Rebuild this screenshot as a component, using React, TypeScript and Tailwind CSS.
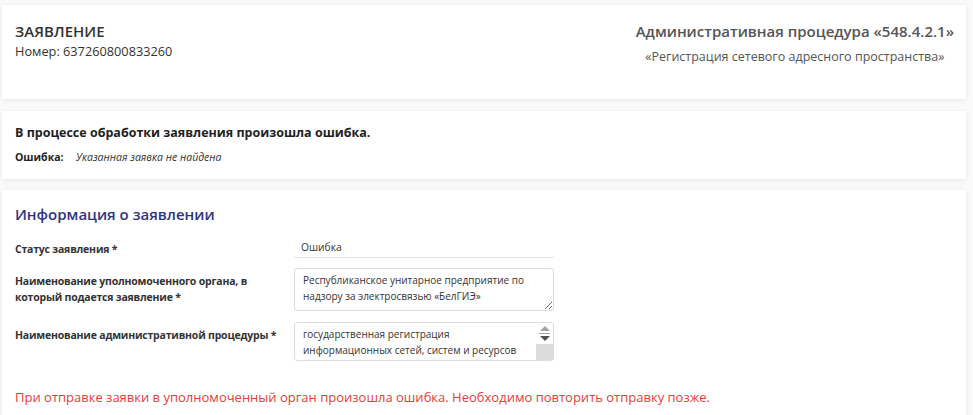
const font = { fontFamily: '"Open Sans", "Noto Sans", sans-serif' };

function Field({ label, children }: { label: string; children: React.ReactNode }) {
  return (
    <div className="grid grid-cols-[279px_260px] items-start">
      <div className="w-[262px] pt-[5px] text-[10.5px] font-bold leading-[16px] tracking-[-0.2px] text-[#333]">{label}</div>
      {children}
    </div>
  );
}

export default function App() {
  return (
    <div className="min-h-[415px] bg-[#fafafa] px-[2px] pt-[5px] text-[#333]" style={font}>
      <div className="mr-[5px] flex h-[94px] justify-between bg-white px-[13px] pt-[16px] pr-[12px] shadow-[0_1px_6px_rgba(0,0,0,0.08)]">
        <div>
          <div className="text-[15px] font-semibold leading-[20px] text-[#333]">ЗАЯВЛЕНИЕ</div>
          <div className="mt-[1px] text-[12.75px] leading-[18px] text-[#333]">Номер: 637260800833260</div>
        </div>
        <div className="flex flex-col items-center">
          <div className="text-[15px] font-semibold leading-[20px] text-[#555]">Административная процедура «548.4.2.1»</div>
          <div className="mt-[7px] text-[12.5px] leading-[17px] text-[#555]">«Регистрация сетевого адресного пространства»</div>
        </div>
      </div>

      <div className="mr-[5px] mt-[12px] h-[68px] bg-white px-[13px] pt-[13px] shadow-[0_1px_6px_rgba(0,0,0,0.08)]">
        <div className="text-[12.5px] font-bold leading-[18px] text-[#222]">В процессе обработки заявления произошла ошибка.</div>
        <div className="mt-[8px] flex text-[10.5px] leading-[14px]">
          <span className="w-[61px] font-bold text-[#222]">Ошибка:</span>
          <span className="italic text-[#333]">Указанная заявка не найдена</span>
        </div>
      </div>

      <div className="mr-[5px] mt-[11px] bg-white px-[13px] pt-[12px] pb-[12px] shadow-[0_1px_6px_rgba(0,0,0,0.08)]">
        <div className="text-[15px] font-semibold leading-[24px] text-[#2e3580]">Информация о заявлении</div>
        <div className="mt-[10px] flex flex-col">
          <Field label="Статус заявления *">
            <div className="h-[22px] rounded-[3px] border-b border-[#e3e3e3] px-[7px] pt-[3px] text-[10.25px] leading-[16px] text-[#333]">
              Ошибка
            </div>
          </Field>
          <div className="mt-[10px]">
            <Field label="Наименование уполномоченного органа, в который подается заявление *">
              <textarea
                readOnly
                className="block h-[43px] w-full resize-y rounded-[3px] border border-[#dcdcdc] px-[8px] py-[3px] text-[10px] leading-[16px] text-[#333] outline-none"
                style={font}
                defaultValue="Республиканское унитарное предприятие по надзору за электросвязью «БелГИЭ»"
              />
            </Field>
          </div>
          <div className="mt-[11px]">
            <Field label="Наименование административной процедуры *">
              <div className="relative h-[39px]">
                <textarea
                  readOnly
                  className="block h-[39px] w-full resize-y overflow-hidden rounded-[3px] border border-[#dcdcdc] py-[3px] pl-[8px] pr-[17px] text-[10px] leading-[16px] text-[#333] outline-none"
                  style={font}
                  defaultValue="государственная регистрация информационных сетей, систем и ресурсов национального сегмента сети Интернет"
                />
                <div className="pointer-events-none absolute right-[1px] top-[1px] flex h-[37px] w-[17px] flex-col items-center">
                  <div className="mt-[3px] h-0 w-0 border-x-[5px] border-b-[5px] border-x-transparent border-b-[#a3a3a3]" />
                  <div className="mt-[2px] h-px w-[11px] bg-[#a3a3a3]" />
                  <div className="mt-[2px] h-0 w-0 border-x-[5px] border-t-[5px] border-x-transparent border-t-[#505050]" />
                  <div className="mt-[3px] w-full flex-1 bg-[#dcdcdc]" />
                </div>
              </div>
            </Field>
          </div>
        </div>
        <div className="mt-[27px] text-[13px] leading-[18px] text-[#e0403a]">
          При отправке заявки в уполномоченный орган произошла ошибка. Необходимо повторить отправку позже.
        </div>
      </div>
    </div>
  );
}
